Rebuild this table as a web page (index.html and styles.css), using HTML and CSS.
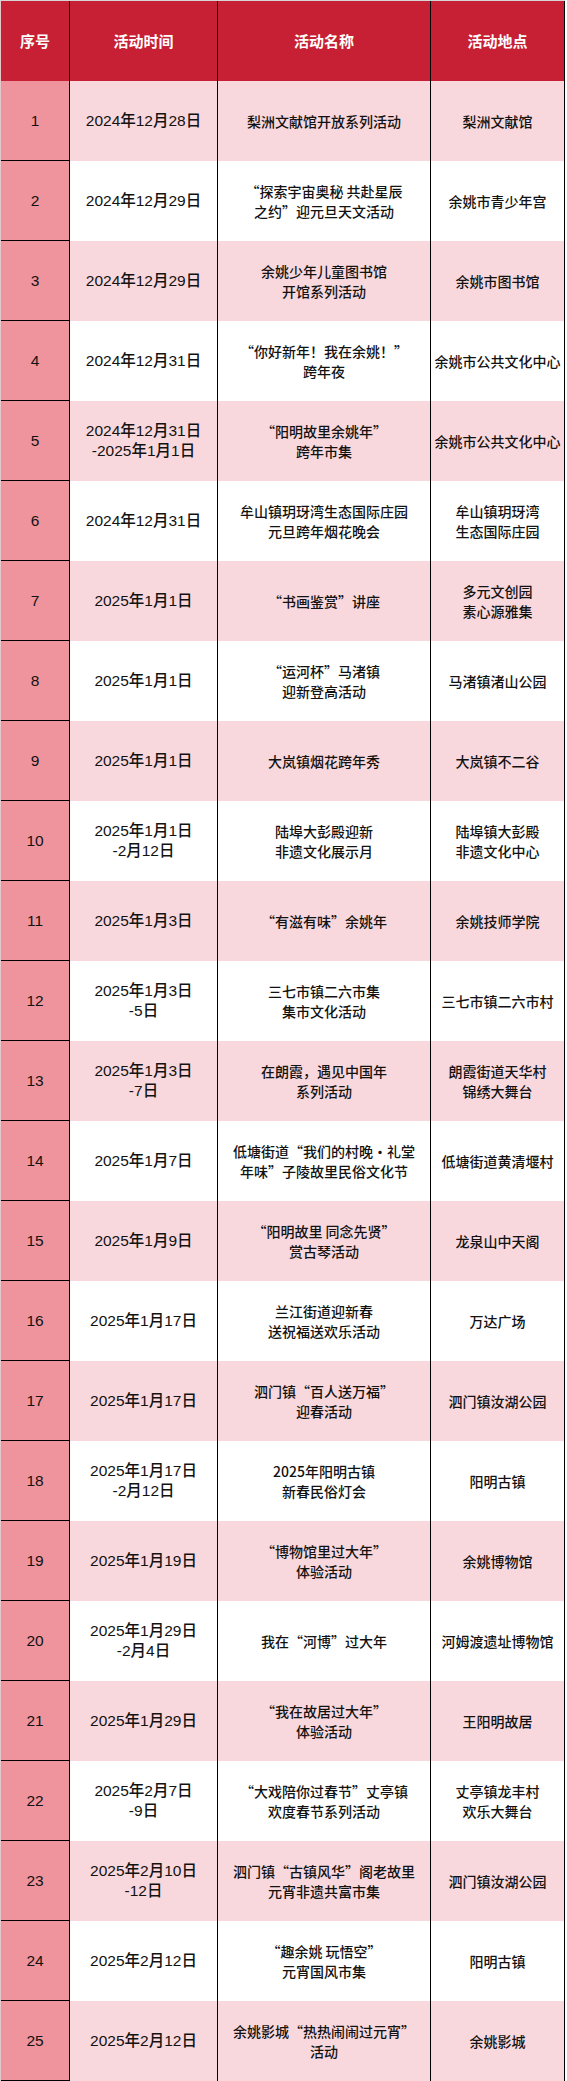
FILE: index.html
```html
<!DOCTYPE html>
<html lang="zh-CN">
<head>
<meta charset="utf-8">
<title>活动一览</title>
<link rel="stylesheet" href="styles.css">
</head>
<body>
<div class="sheet">
  <div class="row head">
    <div class="cell no">序号</div>
    <div class="cell">活动时间</div>
    <div class="cell">活动名称</div>
    <div class="cell">活动地点</div>
  </div>
  <div class="row pink"><div class="cell no">1</div><div class="cell date">2024年12月28日</div><div class="cell">梨洲文献馆开放系列活动</div><div class="cell">梨洲文献馆</div></div>
  <div class="row"><div class="cell no">2</div><div class="cell date">2024年12月29日</div><div class="cell">“探索宇宙奥秘 共赴星辰<br>之约”迎元旦天文活动</div><div class="cell">余姚市青少年宫</div></div>
  <div class="row pink"><div class="cell no">3</div><div class="cell date">2024年12月29日</div><div class="cell">余姚少年儿童图书馆<br>开馆系列活动</div><div class="cell">余姚市图书馆</div></div>
  <div class="row"><div class="cell no">4</div><div class="cell date">2024年12月31日</div><div class="cell">“你好新年！我在余姚！”<br>跨年夜</div><div class="cell">余姚市公共文化中心</div></div>
  <div class="row pink"><div class="cell no">5</div><div class="cell date">2024年12月31日<br>-2025年1月1日</div><div class="cell">“阳明故里余姚年”<br>跨年市集</div><div class="cell">余姚市公共文化中心</div></div>
  <div class="row"><div class="cell no">6</div><div class="cell date">2024年12月31日</div><div class="cell">牟山镇玥玡湾生态国际庄园<br>元旦跨年烟花晚会</div><div class="cell">牟山镇玥玡湾<br>生态国际庄园</div></div>
  <div class="row pink"><div class="cell no">7</div><div class="cell date">2025年1月1日</div><div class="cell">“书画鉴赏”讲座</div><div class="cell">多元文创园<br>素心源雅集</div></div>
  <div class="row"><div class="cell no">8</div><div class="cell date">2025年1月1日</div><div class="cell">“运河杯”马渚镇<br>迎新登高活动</div><div class="cell">马渚镇渚山公园</div></div>
  <div class="row pink"><div class="cell no">9</div><div class="cell date">2025年1月1日</div><div class="cell">大岚镇烟花跨年秀</div><div class="cell">大岚镇不二谷</div></div>
  <div class="row"><div class="cell no">10</div><div class="cell date">2025年1月1日<br>-2月12日</div><div class="cell">陆埠大彭殿迎新<br>非遗文化展示月</div><div class="cell">陆埠镇大彭殿<br>非遗文化中心</div></div>
  <div class="row pink"><div class="cell no">11</div><div class="cell date">2025年1月3日</div><div class="cell">“有滋有味”余姚年</div><div class="cell">余姚技师学院</div></div>
  <div class="row"><div class="cell no">12</div><div class="cell date">2025年1月3日<br>-5日</div><div class="cell">三七市镇二六市集<br>集市文化活动</div><div class="cell">三七市镇二六市村</div></div>
  <div class="row pink"><div class="cell no">13</div><div class="cell date">2025年1月3日<br>-7日</div><div class="cell">在朗霞，遇见中国年<br>系列活动</div><div class="cell">朗霞街道天华村<br>锦绣大舞台</div></div>
  <div class="row"><div class="cell no">14</div><div class="cell date">2025年1月7日</div><div class="cell">低塘街道“我们的村晚·礼堂<br>年味”子陵故里民俗文化节</div><div class="cell">低塘街道黄清堰村</div></div>
  <div class="row pink"><div class="cell no">15</div><div class="cell date">2025年1月9日</div><div class="cell">“阳明故里 同念先贤”<br>赏古琴活动</div><div class="cell">龙泉山中天阁</div></div>
  <div class="row"><div class="cell no">16</div><div class="cell date">2025年1月17日</div><div class="cell">兰江街道迎新春<br>送祝福送欢乐活动</div><div class="cell">万达广场</div></div>
  <div class="row pink"><div class="cell no">17</div><div class="cell date">2025年1月17日</div><div class="cell">泗门镇“百人送万福”<br>迎春活动</div><div class="cell">泗门镇汝湖公园</div></div>
  <div class="row"><div class="cell no">18</div><div class="cell date">2025年1月17日<br>-2月12日</div><div class="cell">2025年阳明古镇<br>新春民俗灯会</div><div class="cell">阳明古镇</div></div>
  <div class="row pink"><div class="cell no">19</div><div class="cell date">2025年1月19日</div><div class="cell">“博物馆里过大年”<br>体验活动</div><div class="cell">余姚博物馆</div></div>
  <div class="row"><div class="cell no">20</div><div class="cell date">2025年1月29日<br>-2月4日</div><div class="cell">我在“河博”过大年</div><div class="cell">河姆渡遗址博物馆</div></div>
  <div class="row pink"><div class="cell no">21</div><div class="cell date">2025年1月29日</div><div class="cell">“我在故居过大年”<br>体验活动</div><div class="cell">王阳明故居</div></div>
  <div class="row"><div class="cell no">22</div><div class="cell date">2025年2月7日<br>-9日</div><div class="cell">“大戏陪你过春节”丈亭镇<br>欢度春节系列活动</div><div class="cell">丈亭镇龙丰村<br>欢乐大舞台</div></div>
  <div class="row pink"><div class="cell no">23</div><div class="cell date">2025年2月10日<br>-12日</div><div class="cell">泗门镇“古镇风华”阁老故里<br>元宵非遗共富市集</div><div class="cell">泗门镇汝湖公园</div></div>
  <div class="row"><div class="cell no">24</div><div class="cell date">2025年2月12日</div><div class="cell">“趣余姚 玩悟空”<br>元宵国风市集</div><div class="cell">阳明古镇</div></div>
  <div class="row pink"><div class="cell no">25</div><div class="cell date">2025年2月12日</div><div class="cell">余姚影城“热热闹闹过元宵”<br>活动</div><div class="cell">余姚影城</div></div>
</div>
</body>
</html>
```
FILE: styles.css
```css
html, body {
  margin: 0;
  padding: 0;
  background: #ffffff;
}

body {
  font-family: "Noto Sans CJK SC", "Liberation Sans", sans-serif;
  color: #121212;
}

.sheet {
  width: 565px;
  border-top: 1px solid #d6d6d6;
  border-left: 1px solid #e2c9cc;
  box-sizing: border-box;
}

.row {
  display: grid;
  grid-template-columns: 69px 148px 213px 134px;
  height: 80px;
  background: #ffffff;
}

.row.pink {
  background: #f9d8dd;
}

.cell {
  display: flex;
  align-items: center;
  justify-content: center;
  text-align: center;
  box-sizing: border-box;
  border-right: 1px solid #000000;
  font-size: 14px;
  font-weight: 500;
  line-height: 20px;
}

.cell.date,
.cell.no {
  font-family: "Liberation Sans", "Noto Sans CJK SC", sans-serif;
  font-size: 15.5px;
}

.cell.no {
  background: #ef949d;
  border-bottom: 1px solid #000000;
}

.row.head {
  background: #c71f33;
  color: #ffffff;
}

.row.head .cell {
  font-family: "Noto Sans CJK SC", sans-serif;
  font-size: 15px;
  font-weight: bold;
}

.row.head .cell.no {
  background: #c71f33;
  border-bottom: none;
}
```
